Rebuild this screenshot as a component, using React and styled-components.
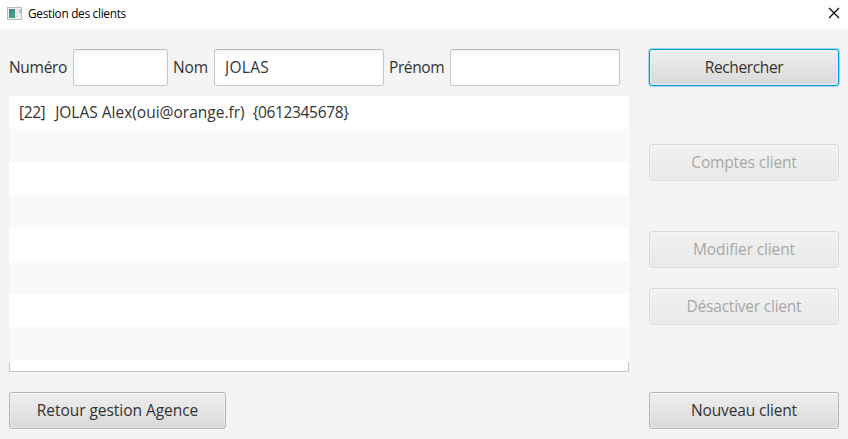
import React from "react";
import styled, { createGlobalStyle } from "styled-components";

const GlobalStyle = createGlobalStyle`
  *, *::before, *::after { box-sizing: border-box; }
  body {
    margin: 0;
    background: #f4f4f4;
    overflow: hidden;
  }
`;

const Window = styled.div`
  width: 848px;
  height: 439px;
  display: flex;
  flex-direction: column;
  background: #f4f4f4;
  color: #333;
  font-family: "Segoe UI", "Open Sans", "Noto Sans", sans-serif;
  font-size: 15.5px;
  line-height: 21px;
`;

const TitleBar = styled.header`
  height: 29px;
  flex: none;
  display: flex;
  align-items: center;
  padding: 0 7px 3px;
  background: #fff;
`;

const Title = styled.h1`
  flex: 1;
  margin: 0 0 0 6px;
  color: #000;
  font-size: 11.8px;
  font-weight: 400;
  line-height: 16px;
  letter-spacing: -0.28px;
`;

const CloseButton = styled.button`
  width: 12px;
  height: 12px;
  margin-right: 1px;
  padding: 0;
  border: 0;
  background: none;
  svg { display: block; }
`;

const Content = styled.main`
  flex: 1;
  display: grid;
  grid-template-columns: 620px 190px;
  column-gap: 20px;
  padding: 20px 9px 10px;
`;

const MainColumn = styled.section`
  display: flex;
  flex-direction: column;
  align-items: flex-start;
`;

const SearchBar = styled.form`
  display: flex;
  align-items: center;
  height: 37px;
`;

const FieldLabel = styled.label`
  width: ${(p) => p.$width}px;
  flex: none;
  padding-left: ${(p) => p.$indent || 0}px;
  white-space: nowrap;
  letter-spacing: ${(p) => p.$tracking || 0}px;
`;

const Field = styled.input`
  width: ${(p) => p.$width}px;
  height: 37px;
  padding: 0 10px 2px;
  border: 1px solid #c6c6c6;
  border-top-color: #b8b8b8;
  border-bottom-color: #cacaca;
  border-radius: 3px;
  outline: 0;
  background: linear-gradient(#f3f3f3, #fff 5px);
  color: #333;
  font: inherit;
  letter-spacing: ${(p) => p.$tracking || 0}px;
`;

const ClientList = styled.ul`
  width: 620px;
  height: 276px;
  margin: 10px 0 20px;
  padding: 0;
  list-style: none;
`;

const ClientRow = styled.li`
  height: 33px;
  display: flex;
  padding: 6px 10px;
  white-space: pre;
  background: ${(p) => (p.$odd ? "#f9f9f9" : "#fff")};
`;

const ClientPart = styled.span`
  letter-spacing: ${(p) => p.$tracking || 0}px;
  margin-right: ${(p) => p.$gap || 0}px;
`;

const ListEnd = styled.li`
  height: 12px;
  padding-top: 2px;
  background: #fff;
  &::after {
    content: "";
    display: block;
    height: 10px;
    border: 1px solid #c5c5c5;
    border-top: 0;
  }
`;

const Actions = styled.aside`
  display: flex;
  flex-direction: column;
`;

const Button = styled.button`
  width: ${(p) => p.$width || 190}px;
  height: 37px;
  flex: none;
  margin: ${(p) => p.$gap || 0}px 0 0;
  padding: 0;
  border: 1px solid #b5b5b5;
  border-radius: 3px;
  background: linear-gradient(#efefef, #d9d9d9);
  box-shadow: inset 0 0 0 1px rgba(255, 255, 255, 0.4), inset 0 1px #fafafa, 0 1px #fafafa;
  color: #333;
  font: inherit;
  letter-spacing: ${(p) => p.$tracking || 0}px;
  white-space: nowrap;
  &:disabled { opacity: 0.4; }
`;

const DefaultButton = styled(Button)`
  border-color: #039ed3;
  box-shadow: inset 0 0 0 1px rgba(225, 246, 252, 0.65), 0 0 0 1px rgba(3, 158, 211, 0.35);
`;

function AppIcon() {
  return (
    <svg width="15" height="13" viewBox="0 0 15 13" aria-hidden="true">
      <defs>
        <linearGradient id="screen" x1="0" y1="0" x2="1" y2="1">
          <stop offset="0" stopColor="#3c7ba0" />
          <stop offset="1" stopColor="#4fae7c" />
        </linearGradient>
      </defs>
      <rect x="0.5" y="0.5" width="14" height="12" fill="#f4f4f4" stroke="#b9bcbc" />
      <rect x="2" y="2" width="6" height="9" fill="url(#screen)" />
      <rect x="8" y="2" width="3" height="9" fill="#e4e6e6" />
      <rect x="12" y="2" width="2" height="4" fill="#a5d0b9" />
      <rect x="12" y="6" width="2" height="5" fill="#e8eae9" />
    </svg>
  );
}

const emptyRows = [1, 2, 3, 4, 5, 6, 7];

export default function App() {
  return (
    <>
      <GlobalStyle />
      <Window>
        <TitleBar>
          <AppIcon />
          <Title>Gestion des clients</Title>
          <CloseButton aria-label="Fermer">
            <svg width="12" height="12" viewBox="0 0 12 12">
              <path d="M1 1L11 11M11 1L1 11" stroke="#000" strokeWidth="1.1" fill="none" />
            </svg>
          </CloseButton>
        </TitleBar>
        <Content>
          <MainColumn>
            <SearchBar onSubmit={(e) => e.preventDefault()}>
              <FieldLabel htmlFor="numero" $width={64} $tracking={-0.3}>Numéro</FieldLabel>
              <Field id="numero" $width={95} />
              <FieldLabel htmlFor="nom" $width={46} $indent={5} $tracking={-0.1}>Nom</FieldLabel>
              <Field id="nom" $width={170} $tracking={0.3} defaultValue="JOLAS" />
              <FieldLabel htmlFor="prenom" $width={66} $indent={5} $tracking={-0.4}>Prénom</FieldLabel>
              <Field id="prenom" $width={170} />
            </SearchBar>
            <ClientList>
              <ClientRow>
                <ClientPart $tracking={-0.4} $gap={2.6}>{"[22]  "}</ClientPart>
                <ClientPart>{"JOLAS Alex(oui@orange.fr)  "}</ClientPart>
                <ClientPart $tracking={-0.36}>{"{0612345678}"}</ClientPart>
              </ClientRow>
              {emptyRows.map((n) => (
                <ClientRow key={n} $odd={n % 2 === 1} />
              ))}
              <ListEnd />
            </ClientList>
            <Button $width={217} $tracking={-0.04}>Retour gestion Agence</Button>
          </MainColumn>
          <Actions>
            <DefaultButton $tracking={-0.38}>Rechercher</DefaultButton>
            <Button $gap={58} $tracking={-0.15} disabled>Comptes client</Button>
            <Button $gap={50} $tracking={-0.13} disabled>Modifier client</Button>
            <Button $gap={20} $tracking={-0.22} disabled>Désactiver client</Button>
            <Button $gap={67} $tracking={-0.15}>Nouveau client</Button>
          </Actions>
        </Content>
      </Window>
    </>
  );
}
